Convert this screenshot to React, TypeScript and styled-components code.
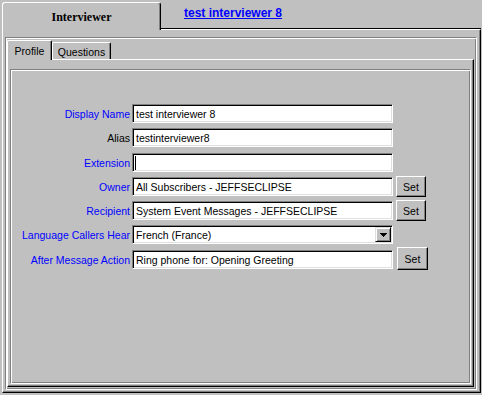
import styled, { createGlobalStyle } from "styled-components";

const GlobalStyle = createGlobalStyle`
  html, body {
    margin: 0;
    padding: 0;
    background: #c0c0c0;
  }
  body {
    font-family: "Liberation Sans", Arial, sans-serif;
  }
`;

interface Row {
  label: string;
  value: string;
  blue: boolean;
  kind: "text" | "caret" | "select";
  set?: "small" | "big";
}

const rows: Row[] = [
  { label: "Display Name", value: "test interviewer 8", blue: true, kind: "text" },
  { label: "Alias", value: "testinterviewer8", blue: false, kind: "text" },
  { label: "Extension", value: "", blue: true, kind: "caret" },
  { label: "Owner", value: "All Subscribers - JEFFSECLIPSE", blue: true, kind: "text", set: "small" },
  { label: "Recipient", value: "System Event Messages - JEFFSECLIPSE", blue: true, kind: "text", set: "small" },
  { label: "Language Callers Hear", value: "French (France)", blue: true, kind: "select" },
  { label: "After Message Action", value: "Ring phone for: Opening Greeting", blue: true, kind: "text", set: "big" },
];

function App() {
  return (
    <>
      <GlobalStyle />
      <Screen>
        <Window>
          <TopBar>
            <MainTab>Interviewer</MainTab>
            <TitleArea>
              <TitleLink href="#">test interviewer 8</TitleLink>
            </TitleArea>
          </TopBar>
          <Body>
            <Etched>
              <TabRow>
                <SubTab $active>Profile</SubTab>
                <SubTab>Questions</SubTab>
                <TabFiller />
              </TabRow>
              <Panel>
                <GroupBox>
                  <Form>
                    {rows.map((r) => (
                      <FormRow key={r.label}>
                        <Label $blue={r.blue}>{r.label}</Label>
                        <Field $select={r.kind === "select"}>
                          {r.kind === "caret" ? <Caret /> : <FieldText>{r.value}</FieldText>}
                          {r.kind === "select" && (
                            <DropButton>
                              <svg width="7" height="4" viewBox="0 0 7 4" shapeRendering="crispEdges">
                                <path d="M0 0h7v1H0z M1 1h5v1H1z M2 2h3v1H2z M3 3h1v1H3z" fill="#000" />
                              </svg>
                            </DropButton>
                          )}
                        </Field>
                        {r.set && <SetButton $big={r.set === "big"}>Set</SetButton>}
                      </FormRow>
                    ))}
                  </Form>
                </GroupBox>
              </Panel>
            </Etched>
          </Body>
        </Window>
      </Screen>
    </>
  );
}

export default App;

const Screen = styled.div`
  width: 482px;
  height: 395px;
  box-sizing: border-box;
  padding: 2px 0 0 2px;
  background: #c0c0c0;
  overflow: hidden;
`;

const Window = styled.div`
  width: 479px;
  display: flex;
  flex-direction: column;
`;

const TopBar = styled.div`
  display: flex;
  align-items: flex-start;
  height: 27px;
`;

const MainTab = styled.div`
  position: relative;
  z-index: 1;
  width: 159px;
  height: 28px;
  box-sizing: border-box;
  padding-top: 7px;
  border-top: 1px solid #fff;
  border-left: 1px solid #fff;
  border-right: 1px solid #000;
  border-radius: 3px 3px 0 0;
  box-shadow: inset -1px 0 #808080;
  background: #c0c0c0;
  text-align: center;
  font: bold 12px/14px "Liberation Serif", "Times New Roman", serif;
  color: #000;
`;

const TitleArea = styled.div`
  flex: 1;
  height: 27px;
  box-sizing: border-box;
  border-bottom: 1px solid #000;
  padding: 1px 0 0 23px;
`;

const TitleLink = styled.a`
  font: bold 12px/14px "Liberation Sans", Arial, sans-serif;
  color: #0000ff;
  text-decoration: underline;
`;

const Body = styled.div`
  height: 364px;
  box-sizing: border-box;
  border-top: 1px solid #fff;
  border-left: 1px solid #fff;
  border-right: 1px solid #000;
  border-bottom: 1px solid #000;
  box-shadow: inset -1px -1px #808080;
  padding: 7px 3px 2px 2px;
`;

const Etched = styled.div`
  height: 100%;
  box-sizing: border-box;
  border: 1px solid;
  border-color: #808080 #fff #fff #808080;
  box-shadow: inset 1px 1px #fff, inset -1px -1px #808080;
  padding: 2px 2px 2px 1px;
  display: flex;
  flex-direction: column;
`;

const TabRow = styled.div`
  display: flex;
  align-items: flex-start;
  height: 19px;
`;

const SubTab = styled.div<{ $active?: boolean }>`
  position: relative;
  z-index: 1;
  box-sizing: border-box;
  width: ${(p) => (p.$active ? 45 : 59)}px;
  height: ${(p) => (p.$active ? 20 : 17)}px;
  margin-top: ${(p) => (p.$active ? 0 : 2)}px;
  padding-top: ${(p) => (p.$active ? 4 : 3)}px;
  border-top: 1px solid #fff;
  border-left: 1px solid #fff;
  border-right: 1px solid #000;
  border-radius: 2px 2px 0 0;
  box-shadow: inset -1px 0 #808080;
  background: #c0c0c0;
  text-align: center;
  font-size: 10.5px;
  line-height: 13px;
  color: #000;
`;

const TabFiller = styled.div`
  flex: 1;
`;

const Panel = styled.div`
  flex: 1;
  display: flex;
  box-sizing: border-box;
  border: 1px solid;
  border-color: #fff #000 #000 #fff;
  box-shadow: inset -1px -1px #808080;
  padding: 9px 2px 2px 2px;
`;

const GroupBox = styled.div`
  flex: 1;
  box-sizing: border-box;
  border: 1px solid;
  border-color: #808080 #fff #fff #808080;
  box-shadow: inset 1px 1px #fff, inset -1px -1px #808080;
  padding-top: 34px;
`;

const Form = styled.div`
  display: grid;
  grid-template-rows: 24px 25px 24px 24px 24px 25px 24px;
`;

const FormRow = styled.div`
  display: grid;
  grid-template-columns: 119px 261px auto;
  column-gap: 2px;
  align-items: start;
  justify-content: start;
`;

const Label = styled.div<{ $blue: boolean }>`
  height: 19px;
  line-height: 20px;
  text-align: right;
  white-space: nowrap;
  font-size: 10.5px;
  color: ${(p) => (p.$blue ? "#0000ff" : "#000")};
`;

const Field = styled.div<{ $select?: boolean }>`
  height: 19px;
  box-sizing: border-box;
  display: flex;
  align-items: center;
  border: 1px solid;
  border-color: #808080 #fff #fff #808080;
  box-shadow: inset 1px 1px #000, inset -1px -1px #dfdfdf;
  background: #fff;
  padding: ${(p) => (p.$select ? "0 1px 0 3px" : "0 3px")};
  overflow: hidden;
`;

const FieldText = styled.span`
  flex: 1;
  white-space: nowrap;
  font-size: 10.5px;
  line-height: 15px;
  padding-top: 1px;
  color: #000;
`;

const Caret = styled.span`
  width: 1px;
  height: 14px;
  margin-left: -1px;
  background: #000;
`;

const DropButton = styled.div`
  width: 16px;
  height: 15px;
  box-sizing: border-box;
  display: flex;
  align-items: center;
  justify-content: center;
  border: 1px solid;
  border-color: #dfdfdf #000 #000 #dfdfdf;
  box-shadow: inset 1px 1px #fff, inset -1px -1px #808080;
  background: #c0c0c0;
`;

const SetButton = styled.div<{ $big?: boolean }>`
  width: ${(p) => (p.$big ? 31 : 30)}px;
  height: ${(p) => (p.$big ? 23 : 21)}px;
  margin: ${(p) => (p.$big ? "-3px 0 0 2px" : "-1px 0 0 1px")};
  box-sizing: border-box;
  border: 1px solid;
  border-color: #fff #000 #000 #fff;
  box-shadow: inset -1px -1px #808080;
  background: #c0c0c0;
  display: flex;
  align-items: center;
  justify-content: center;
  font-size: 10.5px;
  color: #000;
`;
